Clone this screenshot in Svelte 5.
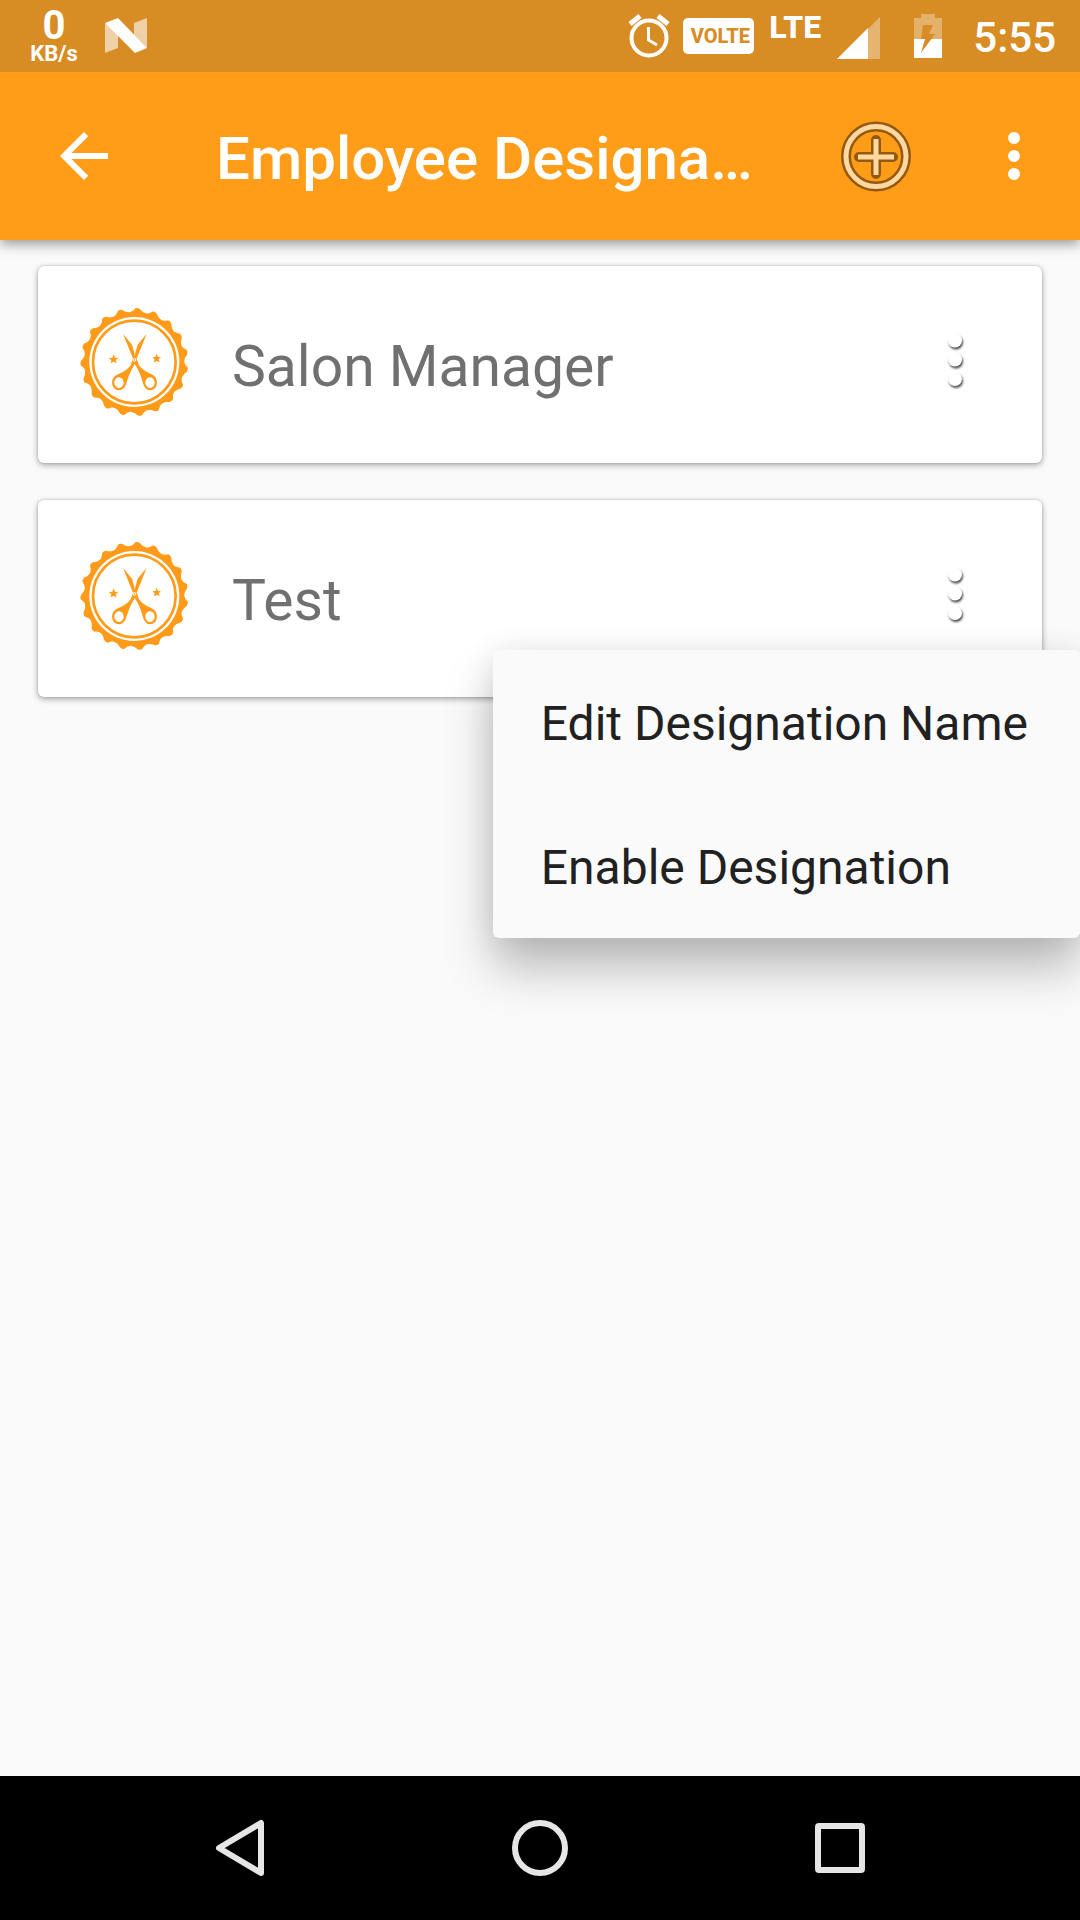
<script>
  const designations = [{ name: 'Salon Manager' }, { name: 'Test' }];
  let openIndex = $state(1);

  const toggle = (i) => (openIndex = openIndex === i ? -1 : i);

  // Scalloped outline of the salon badge: 19 rounded teeth.
  const polar = (deg, r) => {
    const a = (deg * Math.PI) / 180;
    return `${(223 + r * Math.sin(a)).toFixed(1)} ${(216 + r * Math.cos(a) * -1).toFixed(1)}`;
  };
  const step = 360 / 19;
  let sealPath = '';
  for (let i = 0; i < 19; i++) {
    const a = 3 + i * step;
    sealPath += `${i ? 'L' : 'M'}${polar(a - 2, 161)}Q${polar(a, 164)} ${polar(a + 3, 160)}Q${polar(a + 6, 151)} ${polar(a + 10, 150)}Q${polar(a + 14, 150)} ${polar(a + step - 2, 161)}`;
  }
  sealPath += 'Z';
</script>

<div class="screen">
  <div class="status">
    <div class="speed"><span class="rate">0</span><span class="unit">KB/s</span></div>
    <svg class="nougat" viewBox="0 0 42 35" aria-hidden="true">
      <path d="M0 5L13 17V30L0 35ZM29 5L42 0V30L29 17Z" fill="#fff" fill-opacity=".6" />
      <path d="M0 5L13 0L42 30L30 35Z" fill="#fff" />
    </svg>
    <span class="spacer"></span>
    <svg class="alarm" viewBox="0 0 42 44" aria-hidden="true" fill="none" stroke="#fff">
      <circle cx="21" cy="24" r="17.5" stroke-width="4" />
      <path d="M20.500 13V26L29 31" stroke-width="3" />
      <path d="M2 10L12 2M40 10L30 2" stroke-width="5" />
    </svg>
    <span class="volte">VOLTE</span>
    <span class="lte">LTE</span>
    <svg class="signal" viewBox="0 0 43 42" aria-hidden="true" fill="#fff">
      <path d="M31 12L43 0V42H31Z" fill-opacity=".35" />
      <path d="M0 42L31 11V42Z" />
    </svg>
    <svg class="battery" viewBox="0 0 28 44" aria-hidden="true">
      <path d="M7 0H21V4H28V25H0V4H7Z" fill="#fff" fill-opacity=".32" />
      <path d="M0 25H28V44H0Z" fill="#fff" />
      <path d="M9 11H19L15 20H21L7 39L11 25H7Z" fill="#d88c24" />
    </svg>
    <time>5:55</time>
  </div>

  <header>
    <button class="back" aria-label="Back">
      <svg viewBox="0 0 24 24"><path d="M20 11H7.830l5.590-5.590L12 4l-8 8 8 8 1.410-1.410L7.830 13H20z" fill="#fff" /></svg>
    </button>
    <h1>Employee Designation</h1>
    <button class="add" aria-label="Add designation">
      <svg viewBox="0 0 72 72" fill="none">
        <g stroke="#925a10">
          <circle cx="36" cy="36.500" r="30" stroke-width="10" />
          <path d="M36 20V54M19 37H53" stroke-width="10" stroke-linecap="round" />
        </g>
        <g stroke="#ffd7a0">
          <circle cx="36" cy="36.500" r="30" stroke-width="5" />
          <path d="M36 19V55M18 37H54" stroke-width="5" />
        </g>
      </svg>
    </button>
    <button class="more" aria-label="More options">
      <svg viewBox="0 0 24 24" fill="#fff"><circle cx="12" cy="6" r="2" /><circle cx="12" cy="12" r="2" /><circle cx="12" cy="18" r="2" /></svg>
    </button>
  </header>

  <main>
    <ul class="list">
      {#each designations as item, i}
        <li class="card">
          <svg class="badge" viewBox="48 45 348 348" aria-hidden="true" fill="#ff9b18">
            <path d={sealPath} />
            <circle cx="223" cy="216" r="135" fill="#fff" />
            <circle cx="223" cy="216" r="124" fill="none" stroke="#ff9b18" stroke-width="8" />
            <path d="M189 131L216 164Q223 184 226 206L219 206Z" />
            <path d="M260 131L233 164Q226 184 223 206L230 206Z" />
            <path fill-rule="evenodd" d="M219 206L212 226Q200 243 174 253Q156 260 156 279Q158 301 177 301Q194 300 200 277Q208 247 227 218ZM177 262A14 16 0 1 1 176.900 262Z" />
            <path fill-rule="evenodd" d="M230 206L237 226Q249 243 275 253Q291 260 291 279Q289 301 270 301Q254 300 248 277Q241 247 222 218ZM270 262A14 16 0 1 1 269.900 262Z" />
            <circle cx="223" cy="210" r="4" stroke="#fff" stroke-width="3" />
            <path d="M161 193L165 203L175 204L167 210L170 220L161 215L152 220L154 210L146 204L157 203Z" />
            <path d="M290 191L294 201L303 202L296 208L299 217L290 213L281 217L284 208L277 202L286 201Z" />
          </svg>
          <span class="name">{item.name}</span>
          <button class="dots" aria-label="Options for {item.name}" aria-expanded={openIndex === i} onclick={() => toggle(i)}>
            <svg viewBox="0 0 72 72">
              <circle cx="35" cy="13.500" r="7" /><circle cx="35" cy="32.500" r="7" /><circle cx="35" cy="52" r="7" />
            </svg>
          </button>
          {#if openIndex === i}
            <div class="menu" role="menu">
              <button role="menuitem">Edit Designation Name</button>
              <button role="menuitem">Enable Designation</button>
            </div>
          {/if}
        </li>
      {/each}
    </ul>
  </main>

  <nav aria-label="System">
    <button aria-label="Back"><svg viewBox="0 0 72 72"><path d="M57 11V61L15 36Z" /></svg></button>
    <button aria-label="Home"><svg viewBox="0 0 72 72"><circle cx="36" cy="36" r="25" /></svg></button>
    <button aria-label="Recent apps"><svg viewBox="0 0 72 72"><rect x="14" y="14" width="44" height="44" rx="1" /></svg></button>
  </nav>
</div>

<style>
  :global(body) {
    margin: 0;
    background: #fafafa;
  }
  .screen {
    display: flex;
    flex-direction: column;
    min-height: 100vh;
    overflow: hidden;
    background: #fafafa;
    font-family: Roboto, "Liberation Sans", sans-serif;
  }
  button {
    display: flex;
    align-items: center;
    justify-content: center;
    margin: 0;
    padding: 0;
    border: 0;
    background: none;
    font: inherit;
    color: inherit;
    cursor: pointer;
  }
  svg {
    display: block;
    flex: none;
  }
  button svg {
    width: 72px;
    height: 72px;
  }

  .status {
    position: relative;
    z-index: 1;
    display: flex;
    align-items: flex-start;
    height: 72px;
    padding: 0 24px 0 28px;
    box-sizing: border-box;
    background: #d88c24;
    color: #fff;
  }
  .speed {
    display: flex;
    flex-direction: column;
    align-items: center;
    width: 52px;
    padding-top: 8px;
    font-weight: 700;
  }
  .rate {
    font-size: 40px;
    line-height: 36px;
  }
  .unit {
    font-size: 22px;
    line-height: 20px;
  }
  .nougat {
    width: 42px;
    height: 35px;
    margin: 18px 0 0 25px;
  }
  .spacer {
    flex: 1;
  }
  .alarm {
    width: 42px;
    height: 44px;
    margin-top: 14px;
  }
  .volte {
    width: 71px;
    height: 36px;
    margin: 18px 0 0 13px;
    padding-left: 3px;
    box-sizing: border-box;
    border-radius: 5px;
    background: #fff;
    color: #d88c24;
    font-size: 20px;
    font-weight: 800;
    line-height: 36px;
    text-align: center;
  }
  .lte {
    width: 55px;
    margin: 8px 0 0 15px;
    font-size: 32px;
    font-weight: 800;
    line-height: 38px;
  }
  .signal {
    width: 43px;
    height: 42px;
    margin: 17px 0 0 13px;
  }
  .battery {
    width: 28px;
    height: 44px;
    margin: 14px 0 0 34px;
  }
  time {
    margin-left: 31px;
    font-size: 42px;
    font-weight: 500;
    line-height: 76px;
  }

  header {
    position: relative;
    display: flex;
    align-items: center;
    height: 168px;
    background: #ff9c18;
    color: #fff;
    box-shadow: 0 4px 12px rgba(0, 0, 0, 0.4);
  }
  .back {
    width: 168px;
    height: 168px;
  }
  h1 {
    flex: 1;
    min-width: 0;
    margin: 0 36px 0 48px;
    padding-top: 5px;
    overflow: hidden;
    font-size: 60px;
    font-weight: 500;
    line-height: 72px;
    text-overflow: ellipsis;
    white-space: nowrap;
  }
  .add {
    width: 144px;
    height: 168px;
  }
  .more {
    width: 132px;
    height: 168px;
  }

  main {
    flex: 1;
    padding: 26px 38px;
  }
  .list {
    display: grid;
    gap: 37px;
    margin: 0;
    padding: 0;
    list-style: none;
  }
  .card {
    position: relative;
    display: flex;
    align-items: center;
    padding: 39px 50px 42px 38px;
    border-radius: 6px;
    background: #fff;
    box-shadow: 0 2px 6px rgba(0, 0, 0, 0.35), 0 0 2px rgba(0, 0, 0, 0.2);
  }
  .badge {
    width: 116px;
    height: 116px;
  }
  .name {
    flex: 1;
    padding: 8px 0 0 40px;
    color: #707070;
    font-size: 57px;
    line-height: 66px;
  }
  .dots svg {
    fill: #fff;
    filter: drop-shadow(1px 2px 1px rgba(0, 0, 0, 0.7));
  }
  .menu {
    position: absolute;
    z-index: 1;
    top: 150px;
    right: -38px;
    border-radius: 6px;
    background: #fafafa;
    box-shadow: 0 30px 48px rgba(0, 0, 0, 0.26), 0 0 30px rgba(0, 0, 0, 0.08);
    color: #212121;
    font-size: 48px;
    line-height: 56px;
  }
  .menu button {
    justify-content: flex-start;
    width: 100%;
    height: 144px;
    padding: 4px 52px 0 48px;
    box-sizing: border-box;
    white-space: nowrap;
  }

  nav {
    display: grid;
    grid-template-columns: repeat(3, 1fr);
    height: 144px;
    padding: 0 90px;
    background: #000;
  }
  nav svg {
    fill: none;
    stroke: #e6e6e6;
    stroke-width: 6;
    stroke-linejoin: round;
  }
</style>
